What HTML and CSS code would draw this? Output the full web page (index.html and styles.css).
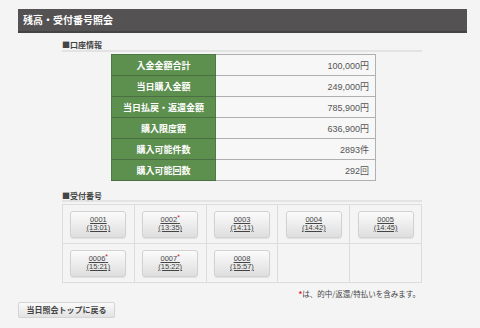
FILE: index.html
```html
<!DOCTYPE html>
<html lang="ja">
<head>
<meta charset="utf-8">
<title>残高・受付番号照会</title>
<link rel="stylesheet" href="styles.css">
</head>
<body>
<div class="page">
  <h1 class="header">残高・受付番号照会</h1>
  <div class="content">
    <div class="sec-title">■口座情報</div>
    <table class="account">
      <tr><th>入金金額合計</th><td>100,000円</td></tr>
      <tr><th>当日購入金額</th><td>249,000円</td></tr>
      <tr><th>当日払戻・返還金額</th><td>785,900円</td></tr>
      <tr><th>購入限度額</th><td>636,900円</td></tr>
      <tr><th>購入可能件数</th><td>2893件</td></tr>
      <tr><th>購入可能回数</th><td>292回</td></tr>
    </table>
    <div class="sec-title sec2">■受付番号</div>
    <div class="grid">
      <div class="cell"><a class="btn" href="#">0001<br>(13:01)</a></div>
      <div class="cell"><a class="btn" href="#">0002<span class="mark">*</span><br>(13:35)</a></div>
      <div class="cell"><a class="btn" href="#">0003<br>(14:11)</a></div>
      <div class="cell"><a class="btn" href="#">0004<br>(14:42)</a></div>
      <div class="cell"><a class="btn" href="#">0005<br>(14:45)</a></div>
      <div class="cell"><a class="btn" href="#">0006<span class="mark">*</span><br>(15:21)</a></div>
      <div class="cell"><a class="btn" href="#">0007<span class="mark">*</span><br>(15:22)</a></div>
      <div class="cell"><a class="btn" href="#">0008<br>(15:57)</a></div>
      <div class="cell"></div>
      <div class="cell"></div>
    </div>
    <div class="note"><span class="mark-n">*</span>は、的中/返還/特払いを含みます。</div>
  </div>
  <button class="back">当日照会トップに戻る</button>
</div>
</body>
</html>
```
FILE: styles.css
```css
html, body {
  margin: 0;
  padding: 0;
  background: #f4f4f4;
}
body {
  font-family: "Liberation Sans", "Noto Sans CJK JP", sans-serif;
  color: #333;
}
.page {
  padding-top: 9px;
}
.header {
  margin: 0 13px 0 18px;
  height: 22px;
  line-height: 22px;
  background: #545252;
  border-bottom: 2px solid #454444;
  color: #fff;
  font-family: "Noto Sans CJK JP", sans-serif;
  font-size: 10px;
  font-weight: bold;
  padding-left: 5px;
}
.content {
  margin-left: 62px;
  width: 360px;
}
.sec-title {
  margin-top: 7px;
  height: 10px;
  line-height: 10px;
  font-family: "Noto Sans CJK JP", sans-serif;
  font-size: 8px;
  font-weight: bold;
  color: #444;
  border-bottom: 2px solid #e3e3e3;
}
.sec2 {
  margin-top: 10px;
  height: 9px;
  line-height: 9px;
}
.account {
  margin: 2px 0 0 49px;
  border-collapse: collapse;
  width: 265px;
}
.account th, .account td {
  height: 20px;
  padding: 0;
  border: 1px solid #b0b0b0;
  font-size: 9px;
}
.account th {
  width: 103px;
  background: #5d8f4f;
  color: #fff;
  font-family: "Noto Sans CJK JP", sans-serif;
  font-weight: bold;
  text-align: center;
  border-color: #4e7a43;
  border-bottom-color: #4b6e42;
}
.account td {
  background: #f7f7f7;
  text-align: right;
  padding-right: 6px;
  color: #555;
}
.grid {
  margin-top: 2px;
  display: grid;
  grid-template-columns: repeat(5, 1fr);
  border-top: 1px solid #dcdcdc;
  border-left: 1px solid #dcdcdc;
}
.cell {
  height: 38px;
  border-right: 1px solid #dcdcdc;
  border-bottom: 1px solid #dcdcdc;
  display: flex;
  align-items: center;
  justify-content: center;
}
.btn {
  display: block;
  box-sizing: border-box;
  width: 56px;
  height: 27px;
  padding-top: 4px;
  border: 1px solid #d2d2d2;
  border-radius: 3px;
  background: linear-gradient(#fbfbfb, #dedede);
  box-shadow: 0 1px 1px rgba(0,0,0,0.08);
  color: #444;
  font-size: 7.5px;
  line-height: 8.5px;
  text-decoration: underline;
  text-align: center;
}
.mark {
  color: #e0141e;
  font-size: 7px;
  vertical-align: top;
  line-height: 6px;
  position: relative;
  top: -1px;
}
.note {
  margin-top: 5px;
  text-align: right;
  padding-right: 2px;
  font-family: "Noto Sans CJK JP", sans-serif;
  font-size: 7.5px;
  line-height: 11px;
  color: #444;
}
.mark-n {
  color: #e0141e;
  font-weight: bold;
}
.back {
  display: block;
  margin: 3px 0 0 18px;
  width: 97px;
  height: 16px;
  padding: 0;
  border: 1px solid #d4d4d4;
  border-radius: 2px;
  background: linear-gradient(#fafafa, #e2e2e2);
  box-shadow: 0 1px 1px rgba(0,0,0,0.08);
  font-family: "Noto Sans CJK JP", sans-serif;
  font-size: 8px;
  font-weight: bold;
  color: #444;
  line-height: 14px;
}
```
